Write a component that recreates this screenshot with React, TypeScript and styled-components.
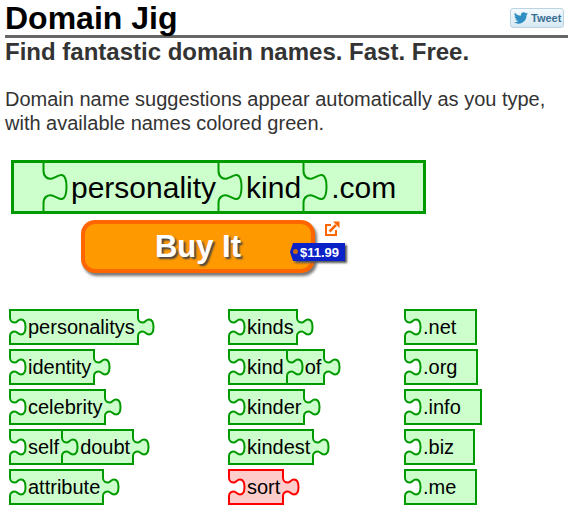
import React from "react";
import styled, { createGlobalStyle } from "styled-components";

const Global = createGlobalStyle`
  html, body { margin: 0; padding: 0; background: #fff; }
  body { font-family: "Liberation Sans", Arial, sans-serif; color: #333; width: 568px; height: 507px; overflow: hidden; }
`;

const Page = styled.div`
  display: flex;
  flex-direction: column;
  padding: 0 0 0 5px;
`;
const Header = styled.header`
  display: flex;
  align-items: flex-start;
  justify-content: space-between;
  height: 35px;
  border-bottom: 3px solid #666;
`;
const Title = styled.h1`
  margin: 0;
  font-size: 32px;
  line-height: 36px;
  font-weight: 700;
  color: #000;
`;
const TweetButton = styled.div`
  display: flex;
  align-items: center;
  gap: 3px;
  box-sizing: border-box;
  width: 54px;
  height: 20px;
  margin: 8px 4px 0 0;
  padding-left: 3px;
  border: 1px solid #bcd3e2;
  border-radius: 3px;
  background: linear-gradient(#f4fafd, #d6e8f3);
  font-size: 11px;
  font-weight: 700;
  color: #3a6f94;
`;
const Subtitle = styled.h2`
  margin: 0;
  font-size: 24px;
  line-height: 28px;
  font-weight: 700;
  color: #333;
`;
const Intro = styled.p`
  margin: 21px 0 0;
  font-size: 20px;
  line-height: 24px;
  color: #333;
`;
const Hero = styled.div`
  display: flex;
  flex-direction: column;
  margin: 25px 0 0 6px;
`;
const BigBar = styled.div`
  display: flex;
  align-items: center;
  box-sizing: border-box;
  width: 415px;
  height: 54px;
  border: 3px solid #090;
  background: #cfc;
  padding-left: 28px;
`;
const BigPiece = styled.div`
  position: relative;
  box-sizing: border-box;
  height: 48px;
  display: flex;
  align-items: center;
  padding: 2px 1px 0 29px;
  font-size: 30px;
  color: #000;
`;
const BigNotch = styled.svg`
  position: absolute;
  left: 0;
  top: 0;
  width: 26px;
  height: 48px;
`;
const BuyRow = styled.div`
  position: relative;
  margin: 6px 0 0 70px;
  width: 234px;
  height: 53px;
`;
const BuyButton = styled.div`
  display: flex;
  align-items: center;
  justify-content: center;
  box-sizing: border-box;
  width: 234px;
  height: 53px;
  border: 4px solid #f60;
  border-radius: 14px;
  background: #f90;
  box-shadow: 2px 3px 3px #777;
  font-size: 31px;
  font-weight: 700;
  color: #fff;
  text-shadow: 2px 2px 2px #444;
`;
const PriceTag = styled.div`
  position: absolute;
  left: 212px;
  top: 23px;
  display: flex;
  align-items: center;
  box-sizing: border-box;
  width: 52px;
  height: 18px;
  padding-left: 7px;
  background: #0a22c8;
  box-shadow: 2px 2px 2px #555;
  font-size: 13px;
  font-weight: 700;
  color: #fff;
  &::before {
    content: "";
    position: absolute;
    left: -3px;
    top: 0;
    border-style: solid;
    border-width: 9px 3px 9px 0;
    border-color: transparent #0a22c8 transparent transparent;
  }
  &::after {
    content: "";
    position: absolute;
    left: 0;
    top: 6px;
    width: 5px;
    height: 5px;
    border-radius: 50%;
    background: #c66a10;
  }
`;
const ExternalIcon = styled.svg`
  position: absolute;
  left: 244px;
  top: 1px;
  width: 15px;
  height: 15px;
`;
const Columns = styled.div`
  display: grid;
  grid-template-columns: 219px 176px auto;
  margin: 36px 0 0 4px;
`;
const Column = styled.div`
  display: flex;
  flex-direction: column;
  gap: 4px;
`;
const Chain = styled.div`
  display: flex;
  height: 36px;
`;
const Piece = styled.div<{ $bad?: boolean; $open?: boolean; $plain?: boolean }>`
  position: relative;
  box-sizing: border-box;
  height: 36px;
  display: flex;
  align-items: center;
  padding: 0 ${(p) => (p.$plain ? "19px" : "2px")} 0 17px;
  border: 2px solid ${(p) => (p.$bad ? "#f00" : "#090")};
  border-right-width: ${(p) => (p.$open ? "0" : "2px")};
  background: ${(p) => (p.$bad ? "#fcc" : "#cfc")};
  font-size: 20px;
  color: #000;
`;
const Notch = styled.svg`
  position: absolute;
  left: -2px;
  top: -2px;
  width: 18px;
  height: 36px;
`;
const Tab = styled.svg`
  position: absolute;
  left: 100%;
  top: -2px;
  width: 18px;
  height: 36px;
`;

const NOTCH =
  "M1 9 C1 12 3.500 13.500 6 13.500 C8 13.500 9 10.500 12 10.500 C15 10.500 16.500 14 16.500 18 C16.500 22 15 25.500 12 25.500 C9 25.500 8 22.500 6 22.500 C3.500 22.500 1 24 1 27";

const TabShape = ({ stroke, fill }: { stroke: string; fill: string }) => (
  <Tab viewBox="0 0 18 36" aria-hidden>
    <path d={`${NOTCH} Z`} fill={fill} stroke="none" />
    <rect x="0" y="9" width="2" height="18" fill={fill} />
    <path d={NOTCH} fill="none" stroke={stroke} strokeWidth="2" />
  </Tab>
);

const NotchShape = ({ stroke, fill }: { stroke: string; fill: string }) => (
  <Notch viewBox="0 0 18 36" aria-hidden>
    <path d={`${NOTCH} Z`} fill={fill} stroke="none" />
    <rect x="0" y="9" width="2" height="18" fill={fill} />
    <path d={NOTCH} fill="none" stroke={stroke} strokeWidth="2" />
  </Notch>
);

const Word = ({ parts, bad, tail = true }: { parts: string[]; bad?: boolean; tail?: boolean }) => {
  const stroke = bad ? "#f00" : "#090";
  const fill = bad ? "#fcc" : "#cfc";
  return (
    <Chain>
      {parts.map((t, i) => {
        const last = i === parts.length - 1;
        return (
          <Piece key={t} $bad={bad} $open={!last} $plain={!tail}>
            <NotchShape stroke={stroke} fill={i > 0 ? fill : "#fff"} />
            {t}
            {tail && last && <TabShape stroke={stroke} fill={fill} />}
          </Piece>
        );
      })}
    </Chain>
  );
};

const BIG =
  "M1.500 0 L1.500 8 C1.500 14 6 16.500 10 15.500 C15 14 17 11.500 20 12 C24 13 24.500 18 24.500 24 C24.500 30 24 35 20 36 C17 36.500 15 34 10 32.500 C6 31.500 1.500 34 1.500 40 L1.500 48";

const BigWord = ({ children }: { children: React.ReactNode }) => (
  <BigPiece>
    <BigNotch viewBox="0 0 26 48" aria-hidden>
      <path d={BIG} fill="none" stroke="#090" strokeWidth="2" />
    </BigNotch>
    {children}
  </BigPiece>
);

const col1 = [["personalitys"], ["identity"], ["celebrity"], ["self", "doubt"], ["attribute"]];
const col2 = [["kinds"], ["kind", "of"], ["kinder"], ["kindest"], ["sort"]];
const col3 = [".net", ".org", ".info", ".biz", ".me"];

export default function App() {
  return (
    <Page>
      <Global />
      <Header>
        <Title>Domain Jig</Title>
        <TweetButton>
          <svg width="14" height="12" viewBox="0 0 24 20" aria-hidden>
            <path
              fill="#2f8fc4"
              d="M24 2.4c-.9.4-1.8.7-2.8.8 1-.6 1.8-1.6 2.2-2.7-1 .6-2 1-3.100 1.200A4.900 4.900 0 0 0 11.900 6.100C7.800 5.900 4.200 3.900 1.700.900a4.900 4.900 0 0 0 1.500 6.600c-.8 0-1.600-.2-2.200-.6 0 2.400 1.700 4.400 3.900 4.900-.7.200-1.500.2-2.200.1.600 2 2.400 3.400 4.600 3.400A9.900 9.900 0 0 1 0 17.400 14 14 0 0 0 21.500 5c1-.7 1.800-1.600 2.500-2.600z"
            />
          </svg>
          Tweet
        </TweetButton>
      </Header>
      <Subtitle>Find fantastic domain names. Fast. Free.</Subtitle>
      <Intro>
        Domain name suggestions appear automatically as you type,
        <br />
        with available names colored green.
      </Intro>
      <Hero>
        <BigBar>
          <BigWord>personality</BigWord>
          <BigWord>kind</BigWord>
          <BigWord>.com</BigWord>
        </BigBar>
        <BuyRow>
          <BuyButton>Buy It</BuyButton>
          <ExternalIcon viewBox="0 0 15 15" aria-hidden>
            <path d="M6 4H1V14H11V9" fill="none" stroke="#f60" strokeWidth="2" />
            <path d="M4.500 10.500L11 4" fill="none" stroke="#f60" strokeWidth="2.500" />
            <path d="M8 0.500H14.500V7z" fill="#f60" />
          </ExternalIcon>
          <PriceTag>$11.99</PriceTag>
        </BuyRow>
      </Hero>
      <Columns>
        <Column>
          {col1.map((p) => (
            <Word key={p.join()} parts={p} />
          ))}
        </Column>
        <Column>
          {col2.map((p) => (
            <Word key={p.join()} parts={p} bad={p[0] === "sort"} />
          ))}
        </Column>
        <Column>
          {col3.map((t) => (
            <Word key={t} parts={[t]} tail={false} />
          ))}
        </Column>
      </Columns>
    </Page>
  );
}
